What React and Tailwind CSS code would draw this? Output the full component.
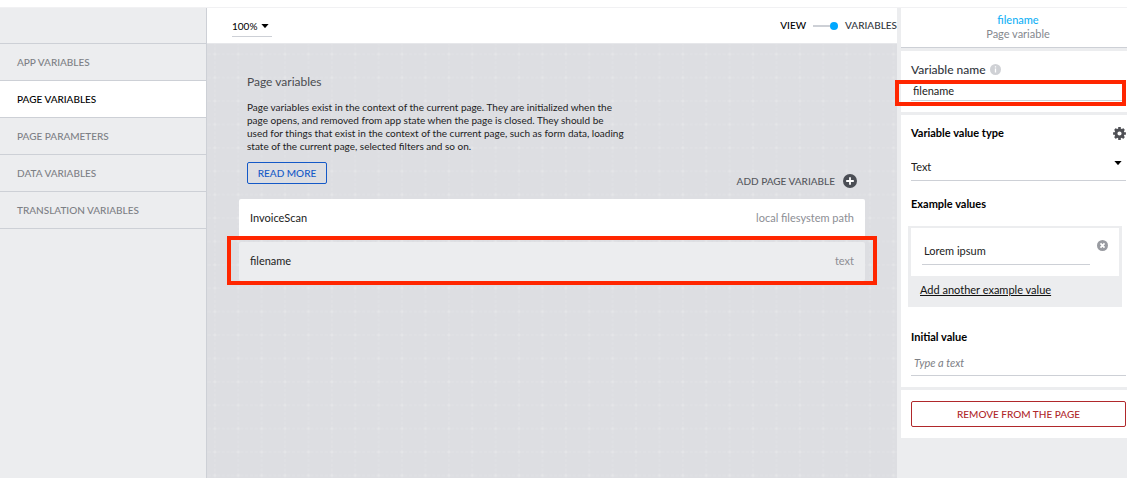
const sections = [
  "APP VARIABLES",
  "PAGE VARIABLES",
  "PAGE PARAMETERS",
  "DATA VARIABLES",
  "TRANSLATION VARIABLES",
];

function Caret() {
  return (
    <svg viewBox="0 0 8 4" className="pointer-events-none h-1 w-2 shrink-0" aria-hidden="true">
      <path d="M0.4 0h7.2L4.6 3.6Q4 4.2 3.4 3.6z" fill="currentColor" />
    </svg>
  );
}

function PlusIcon() {
  return (
    <svg viewBox="0 0 14 14" className="size-3.5 text-[#4b4e55]" aria-hidden="true">
      <circle cx="7" cy="7" r="7" fill="currentColor" />
      <path d="M7 3.2v7.6M3.2 7h7.6" stroke="#fff" strokeWidth="1.8" />
    </svg>
  );
}

function RemoveIcon() {
  return (
    <svg viewBox="0 0 12 12" className="block size-[11px] text-[#999ba1]" aria-hidden="true">
      <circle cx="6" cy="6" r="6" fill="currentColor" />
      <path d="M3.8 3.8l4.4 4.4M8.2 3.8L3.8 8.2" stroke="#fff" strokeWidth="1.9" />
    </svg>
  );
}

function InfoIcon() {
  return (
    <svg viewBox="0 0 12 12" className="size-[11px] text-[#cfd1d5]" aria-hidden="true">
      <circle cx="6" cy="6" r="6" fill="currentColor" />
      <path d="M6 2.4v1.5M6 5v4.4" stroke="#fff" strokeWidth="1.4" />
    </svg>
  );
}

function GearIcon() {
  return (
    <svg viewBox="-7 -7 14 14" className="block size-[13px] text-[#4f5055]" aria-hidden="true">
      <circle r="3.8" fill="none" stroke="currentColor" strokeWidth="3.1" />
      <g stroke="currentColor" strokeWidth="2.8">
        <path d="M0 -6.9V-4M0 4V6.9M-6.9 0H-4M4 0H6.9" />
        <path d="M0 -6.9V-4M0 4V6.9M-6.9 0H-4M4 0H6.9" transform="rotate(45)" />
      </g>
    </svg>
  );
}

function Sidebar() {
  return (
    <nav className="w-[207px] shrink-0 border-r border-[#cdd0d6] bg-[#ecedef]">
      <div className="h-9 border-b border-[#cdd0d6]" />
      <ul>
        {sections.map((name) => {
          const active = name === "PAGE VARIABLES";
          return (
            <li key={name} className="border-b border-[#cdd0d6]">
              <a
                href="#"
                aria-current={active ? "page" : undefined}
                className={
                  "flex h-9 items-center pl-[17px] text-[10px] font-medium " +
                  (active ? "bg-white text-black" : "text-[#7c7f85]")
                }
              >
                {name}
              </a>
            </li>
          );
        })}
      </ul>
    </nav>
  );
}

function Toolbar() {
  return (
    <header className="flex h-9 items-center justify-between border-b border-[#e6e7ea] bg-white pl-[25px]">
      <div className="mt-0.5 flex h-5 w-10 items-center justify-between border-b border-[#cdd0d6] pr-[3px]">
        <select aria-label="Zoom" className="w-7 shrink-0 appearance-none bg-transparent text-[10px] outline-none">
          <option>100%</option>
        </select>
        <Caret />
      </div>
      <div className="flex items-center gap-[7px] text-[10px] font-medium">
        <span className="text-black">VIEW</span>
        <button type="button" role="switch" aria-checked="true" aria-label="Variables view" className="flex items-center">
          <span className="h-0.5 w-[17px] bg-[#cdd0d6]" />
          <span className="size-2 rounded-full bg-[#00a8ff]" />
        </button>
        <span className="text-[#32363d]">VARIABLES</span>
      </div>
    </header>
  );
}

function CanvasGrid() {
  return (
    <svg className="absolute inset-0 h-full w-full" aria-hidden="true">
      <defs>
        <pattern id="grid" x="19.6" y="-1.4" width="23.4" height="23.4" patternUnits="userSpaceOnUse">
          <path
            d="M0 11.7H23.4M11.7 0V23.4"
            stroke="#e2e3e6"
            strokeWidth="0.9"
            strokeDasharray="3 1.68"
            fill="none"
          />
          <path d="M10.2 11.7h3M11.7 10.2v3" stroke="#e6e7e9" strokeWidth="1" />
        </pattern>
      </defs>
      <rect width="100%" height="100%" fill="url(#grid)" />
    </svg>
  );
}

function VariableRow({ name, type, selected }) {
  return (
    <li
      className={
        "relative flex h-[39px] items-center justify-between rounded-xs px-[11px] " +
        (selected ? "bg-[#ecedef]" : "bg-white")
      }
    >
      <span className="text-[#222]">{name}</span>
      <span className="text-[#8c8e94]">{type}</span>
      {selected && <span className="absolute -inset-x-3 -top-1.5 -bottom-1 border-4 border-[#ff2600]" />}
    </li>
  );
}

function Canvas() {
  return (
    <main className="relative flex-1 bg-[#dddee2]">
      <CanvasGrid />
      <div className="relative px-8 pt-7">
        <div className="pl-2">
          <h1 className="text-xs leading-5 text-[#4a4b4f]">Page variables</h1>
          <p className="mt-[9px] max-w-[378px] text-[10px] leading-[13px] text-[#222]">
            Page variables exist in the context of the current page. They are initialized when the page opens, and
            removed from app state when the page is closed. They should be used for things that exist in the context
            of the current page, such as form data, loading state of the current page, selected filters and so on.
          </p>
        </div>
        <div className="mt-[9px] flex h-[37px] items-start justify-between px-2">
          <a
            href="#"
            className="flex h-[22px] w-20 items-center justify-center rounded-xs border border-[#1459c7] text-[10px] font-medium text-[#1459c7]"
          >
            READ MORE
          </a>
          <button type="button" className="mt-3 flex items-center gap-2 text-[10px] leading-[14px] font-medium text-[#55575d]">
            ADD PAGE VARIABLE
            <PlusIcon />
          </button>
        </div>
        <ul className="flex flex-col gap-1">
          <VariableRow name="InvoiceScan" type="local filesystem path" />
          <VariableRow name="filename" type="text" selected />
        </ul>
      </div>
    </main>
  );
}

function Inspector() {
  return (
    <aside className="flex w-[230px] shrink-0 flex-col gap-[3px] bg-[#ecedef] pl-1">
      <div className="h-10 border-b border-[#cdd0d6] bg-white pt-[5px] pl-2 text-center leading-[14px]">
        <div className="font-medium text-[#14b1f5]">filename</div>
        <div className="text-[#85888e]">Page variable</div>
      </div>

      <section className="h-[61px] bg-white pr-px pl-2.5">
        <div className="flex items-center gap-1 pt-2.5 leading-[17px]">
          <label htmlFor="variable-name" className="text-xs leading-[17px] font-medium text-[#32363d]">
            Variable name
          </label>
          <InfoIcon />
        </div>
        <div className="relative border-b border-[#cdd0d6]">
          <input
            id="variable-name"
            defaultValue="filename"
            className="block h-[22px] w-full bg-transparent pt-0.5 pl-0.5 text-[#222] outline-none"
          />
          <span className="pointer-events-none absolute top-0.5 right-0 -bottom-1.5 -left-4 border-4 border-[#ff2600]" />
        </div>
      </section>

      <section className="bg-white pr-px pb-[11px] pl-2.5">
        <div className="flex h-9 items-center justify-between">
          <label htmlFor="value-type" className="font-bold">
            Variable value type
          </label>
          <button type="button" aria-label="Value type settings">
            <GearIcon />
          </button>
        </div>
        <div className="flex h-[30px] items-start border-b border-[#cdd0d6] pr-1">
          <select id="value-type" className="h-full w-full appearance-none bg-transparent pt-[3px] text-[#222] outline-none">
            <option>Text</option>
          </select>
          <span className="pt-2.5">
            <Caret />
          </span>
        </div>

        <h2 className="mt-[13px] leading-5 font-bold">Example values</h2>
        <div className="mt-3 mr-1 -ml-[3px] h-[81px] bg-[#ecedef] px-[3px] pt-0.5">
          <div className="flex h-12 items-start justify-between bg-white px-[11px] pt-3">
            <input
              aria-label="Example value"
              defaultValue="Lorem ipsum"
              className="h-[25px] w-[168px] border-b border-[#cdd0d6] bg-transparent pb-[3px] pl-0.5 text-[#222] outline-none"
            />
            <button type="button" aria-label="Remove example value">
              <RemoveIcon />
            </button>
          </div>
          <a href="#" className="ml-[9px] flex h-7 items-center text-[#111] underline">
            Add another example value
          </a>
        </div>

        <label htmlFor="initial-value" className="mt-5 block leading-5 font-bold">
          Initial value
        </label>
        <input
          id="initial-value"
          placeholder="Type a text"
          className="block h-[29px] w-full border-b border-[#cdd0d6] bg-transparent pt-[3px] pl-[3px] italic outline-none placeholder:text-[#7d8086]"
        />
      </section>

      <section className="bg-white py-[11px] pr-px pl-2.5">
        <button
          type="button"
          className="block h-[26px] w-full rounded-xs border border-[#b0282b] text-[10px] font-medium text-[#b0282b]"
        >
          REMOVE FROM THE PAGE
        </button>
      </section>
    </aside>
  );
}

export default function App() {
  return (
    <div className="flex min-h-screen flex-col bg-white font-[Lato,sans-serif] text-[11px]">
      <div className="h-2 border-b border-[#f1f1f3]" />
      <div className="flex flex-1">
        <Sidebar />
        <div className="flex min-w-0 flex-1 flex-col">
          <Toolbar />
          <Canvas />
        </div>
        <Inspector />
      </div>
    </div>
  );
}
